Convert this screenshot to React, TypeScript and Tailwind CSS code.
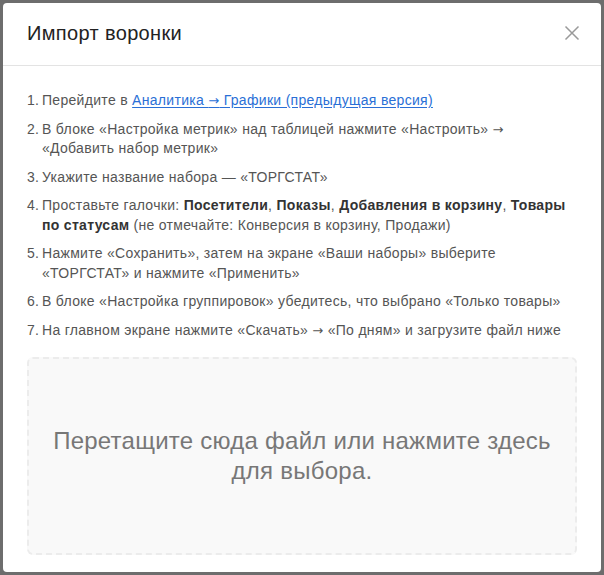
import React from "react";

const Arrow = () => (
  <span className="text-[13px]" style={{ fontFamily: '"DejaVu Sans", sans-serif' }}>
    →
  </span>
);

const items: React.ReactNode[] = [
  <>
    Перейдите в{" "}
    <a href="#" className="text-[#2a6fd6] underline underline-offset-2">
      Аналитика <Arrow /> Графики (предыдущая версия)
    </a>
  </>,
  <>
    В блоке «Настройка метрик» над таблицей нажмите «Настроить» <Arrow /> «Добавить набор метрик»
  </>,
  <>Укажите название набора — «ТОРГСТАТ»</>,
  <>
    Проставьте галочки: <b className="font-bold text-[#333]">Посетители</b>,{" "}
    <b className="font-bold text-[#333]">Показы</b>,{" "}
    <b className="font-bold text-[#333]">Добавления в корзину</b>,{" "}
    <b className="font-bold text-[#333]">Товары по статусам</b> (не отмечайте: Конверсия в корзину, Продажи)
  </>,
  <>Нажмите «Сохранить», затем на экране «Ваши наборы» выберите «ТОРГСТАТ» и нажмите «Применить»</>,
  <>В блоке «Настройка группировок» убедитесь, что выбрано «Только товары»</>,
  <>
    На главном экране нажмите «Скачать» <Arrow /> «По дням» и загрузите файл ниже
  </>,
];

export default function App() {
  return (
    <div
      className="h-[575px] w-[604px] bg-[#6d6d6d] p-[3px]"
      style={{ fontFamily: '"Liberation Sans", Arial, sans-serif' }}
    >
      <div className="flex h-full flex-col rounded-[4px] bg-white">
        <div className="flex h-[63px] items-center justify-between border-b border-[#e3e3e3] pl-6 pr-[21px]">
          <h2 className="-mt-[2px] text-[20px] leading-[24px] tracking-[0.35px] text-[#222]">Импорт воронки</h2>
          <svg width="16" height="16" viewBox="0 0 16 16" className="-mt-[2px] text-[#9a9a9a]">
            <path d="M1.5 1.5 L14.5 14.5 M14.5 1.5 L1.5 14.5" stroke="currentColor" strokeWidth="1.5" />
          </svg>
        </div>
        <div className="flex flex-1 flex-col px-6 pt-[25px] pb-[17px]">
          <ol className="mb-[17px] flex flex-col gap-[9px] text-[14px] leading-[19.5px] tracking-[0.3px] text-[#555]">
            {items.map((c, i) => (
              <li key={i} className="flex">
                <span className="w-[15px] shrink-0">{i + 1}.</span>
                <span>{c}</span>
              </li>
            ))}
          </ol>
          <div className="flex flex-1 items-center justify-center rounded-[6px] border-2 border-dashed border-[#ececec] bg-[#f9f9f9] px-6">
            <p className="text-center text-[24px] leading-[30px] tracking-[0.25px] text-[#777]">
              Перетащите сюда файл или нажмите здесь
              <br />
              для выбора.
            </p>
          </div>
        </div>
      </div>
    </div>
  );
}
